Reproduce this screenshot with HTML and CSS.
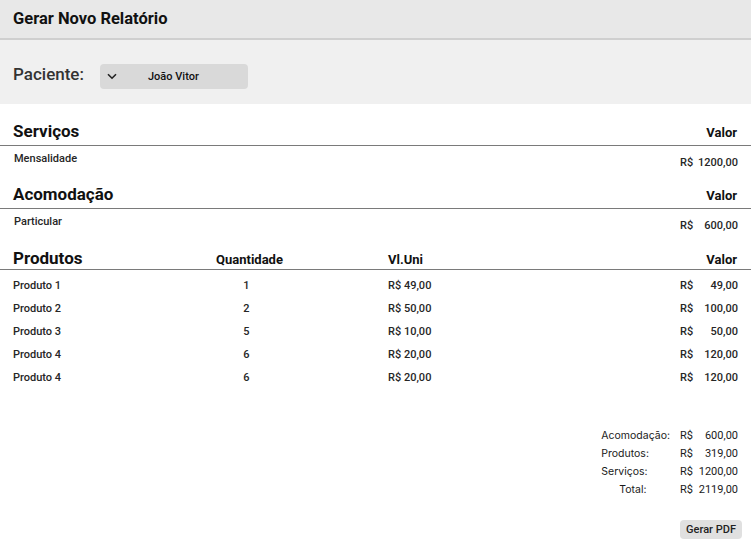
FILE: index.html
```html
<!DOCTYPE html>
<html lang="pt">
<head>
<meta charset="utf-8">
<link rel="stylesheet" href="styles.css">
</head>
<body>
<header class="topbar"><h1 class="title">Gerar Novo Relatório</h1></header>
<section class="patient">
  <span class="patient-label">Paciente:</span>
  <div class="select">
    <svg class="chev" width="10" height="7" viewBox="0 0 10 7"><path d="M1 1.2 L5 5.2 L9 1.2" fill="none" stroke="#222" stroke-width="1.6"/></svg>
    <span class="select-text">João Vitor</span>
  </div>
</section>

<section class="block first">
  <div class="block-head"><span class="h2">Serviços</span><span class="h3">Valor</span></div>
  <div class="simple-row"><span>Mensalidade</span><span class="money low"><span>R$</span><span>1200,00</span></span></div>
</section>

<section class="block">
  <div class="block-head"><span class="h2">Acomodação</span><span class="h3">Valor</span></div>
  <div class="simple-row"><span>Particular</span><span class="money low"><span>R$</span><span>600,00</span></span></div>
</section>

<section class="products">
  <div class="prod-head">
    <span class="h2">Produtos</span>
    <span class="h3 qty-h">Quantidade</span>
    <span class="h3 vl">Vl.Uni</span>
    <span class="h3 right">Valor</span>
  </div>
  <div class="prod-body">
    <div class="prod-row"><span>Produto 1</span><span class="qty">1</span><span class="vl">R$ 49,00</span><span class="money"><span>R$</span><span>49,00</span></span></div>
    <div class="prod-row"><span>Produto 2</span><span class="qty">2</span><span class="vl">R$ 50,00</span><span class="money"><span>R$</span><span>100,00</span></span></div>
    <div class="prod-row"><span>Produto 3</span><span class="qty">5</span><span class="vl">R$ 10,00</span><span class="money"><span>R$</span><span>50,00</span></span></div>
    <div class="prod-row"><span>Produto 4</span><span class="qty">6</span><span class="vl">R$ 20,00</span><span class="money"><span>R$</span><span>120,00</span></span></div>
    <div class="prod-row"><span>Produto 4</span><span class="qty">6</span><span class="vl">R$ 20,00</span><span class="money"><span>R$</span><span>120,00</span></span></div>
  </div>
</section>

<section class="summary">
  <div class="sum-grid">
    <span class="sum-label">Acomodação:</span><span class="money"><span>R$</span><span>600,00</span></span>
    <span class="sum-label">Produtos:</span><span class="money"><span>R$</span><span>319,00</span></span>
    <span class="sum-label">Serviços:</span><span class="money"><span>R$</span><span>1200,00</span></span>
    <span class="sum-label total">Total:</span><span class="money"><span>R$</span><span>2119,00</span></span>
  </div>
  <button class="pdf">Gerar PDF</button>
</section>
</body>
</html>
```

FILE: styles.css
```css
* { box-sizing: border-box; }
html, body { margin: 0; padding: 0; background: #fff; }
body {
  font-family: Roboto, "Liberation Sans", sans-serif;
  color: #111;
  width: 751px;
}
.topbar {
  height: 40px;
  background: #e8e8e8;
  border-bottom: 2px solid #cfcfcf;
  padding: 0 13px;
  display: flex;
  align-items: center;
}
.title {
  margin: 0;
  font-size: 16.5px;
  font-weight: 700;
  color: #111;
  padding-bottom: 1px;
}
.patient {
  height: 64px;
  background: #f0f0f0;
  display: flex;
  align-items: center;
  padding: 0 13px;
}
.patient-label {
  font-size: 17px;
  font-weight: 500;
  color: #333;
  width: 87px;
  margin-top: 3px;
}
.select {
  width: 148px;
  height: 25px;
  background: #d9d9d9;
  border-radius: 4px;
  display: flex;
  align-items: center;
  padding-left: 7px;
  margin-top: 8px;
}
.chev { margin-right: 31px; }
.select-text { font-size: 11px; font-weight: 500; color: #111; }

.block { padding-top: 13px; }
.block.first { padding-top: 14px; }
.block-head {
  display: flex;
  justify-content: space-between;
  align-items: flex-end;
  padding: 0 13px 4px;
  border-bottom: 1.5px solid #7a7a7a;
  height: 28px;
}
.h2 { font-size: 17px; font-weight: 700; color: #111; line-height: 20px; }
.h3 { font-size: 13px; font-weight: 700; color: #111; line-height: 14px; }
.block-head .h3 { margin-bottom: 1px; margin-right: 1px; }
.simple-row {
  display: flex;
  justify-content: space-between;
  align-items: flex-start;
  height: 22px;
  padding: 6px 13px 0 14px;
  font-size: 11px;
  font-weight: 500;
  color: #262626;
  line-height: 13px;
}
.money {
  display: inline-flex;
  justify-content: space-between;
  width: 58px;
  font-size: 11px;
  font-weight: 500;
  color: #262626;
}
.money.low { padding-top: 4px; }

.products { padding-top: 15px; }
.prod-head, .prod-row {
  display: grid;
  grid-template-columns: 203px 67px 1fr 80px;
  padding: 0 13px;
}
.prod-head {
  border-bottom: 1.5px solid #7a7a7a;
  height: 24px;
  align-items: end;
  padding-bottom: 1px;
}
.prod-head .h3 { margin-bottom: 1px; }
.vl { padding-left: 105px; }
.right { text-align: right; margin-right: 1px; }
.prod-body { padding-top: 4px; }
.prod-row {
  height: 23px;
  align-items: center;
  font-size: 11px;
  font-weight: 500;
  color: #262626;
}
.qty { text-align: center; padding-right: 6px; }
.prod-row .money { justify-self: end; }

.summary {
  display: flex;
  flex-direction: column;
  align-items: flex-end;
  padding: 38px 13px 0;
}
.sum-grid {
  display: grid;
  grid-template-columns: auto 58px;
  column-gap: 10px;
  font-family: Inter, Roboto, sans-serif;
  font-size: 10.5px;
  color: #1a1a1a;
}
.sum-grid > span { height: 18px; line-height: 18px; }
.sum-label.total { padding-left: 18px; }
.sum-grid .money { font-family: Roboto, sans-serif; font-weight: 400; color: #1a1a1a; align-items: center; }
.pdf {
  margin-top: 21px;
  margin-right: -4px;
  font-family: Roboto, sans-serif;
  font-size: 11px;
  font-weight: 500;
  color: #222;
  background: #e0e0e0;
  border: none;
  border-radius: 4px;
  padding: 0;
  width: 62px;
  height: 19px;
}
```
